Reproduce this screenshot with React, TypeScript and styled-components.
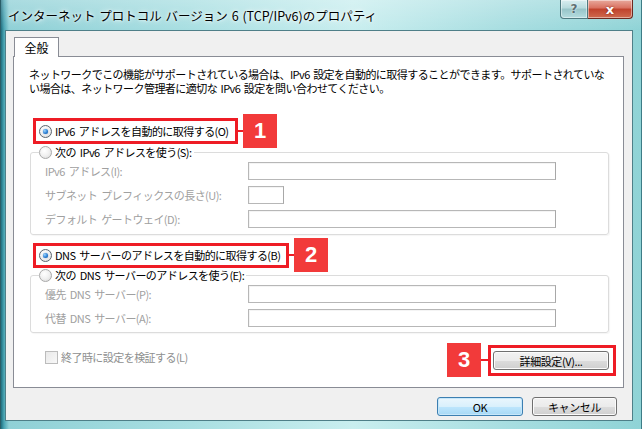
import React from 'react';
import styled, { createGlobalStyle } from 'styled-components';

const Global = createGlobalStyle`
  html, body { margin: 0; padding: 0; }
  body {
    width: 642px; height: 429px; overflow: hidden;
    font-family: "Noto Sans CJK JP", "Noto Sans", sans-serif;
    color: #000;
  }
`;

const Window = styled.div`
  width: 642px;
  height: 429px;
  box-sizing: border-box;
  display: flex;
  flex-direction: column;
  background:
    linear-gradient(180deg, rgba(255,255,255,0.25) 0px, rgba(255,255,255,0) 30px),
    linear-gradient(90deg, #1f6f80 0px, #4aa5b3 3px, #8fd0d6 8px, #a9dfe2 30%, #c9eeef 55%, #a6dde0 80%, #8fd3d6 100%);
  border-left: 1px solid #2a5e68;
  border-right: 1px solid #3d7c86;
`;

const TitleBar = styled.div`
  height: 30px;
  display: flex;
  align-items: flex-start;
  flex-shrink: 0;
`;

const TitleText = styled.div`
  margin: 7px 0 0 7px;
  font-size: 12.5px;
  line-height: 17px;
  word-spacing: 1px;
  white-space: nowrap;
  text-shadow: 0 0 6px #fff, 0 0 3px #fff;
`;

const Captions = styled.div`
  margin-left: auto;
  margin-right: 8px;
  display: flex;
`;

const CaptionButton = styled.div<{ $close?: boolean }>`
  height: 19px;
  width: ${p => (p.$close ? 45 : 28)}px;
  box-sizing: border-box;
  border: 1px solid ${p => (p.$close ? '#6d2a20' : '#4f7a80')};
  border-top: none;
  border-left: ${p => (p.$close ? 'none' : '1px solid #4f7a80')};
  border-radius: ${p => (p.$close ? '0 0 4px 0' : '0 0 0 4px')};
  background: ${p =>
    p.$close
      ? 'linear-gradient(180deg, #e8a99c 0%, #d9705f 45%, #c0422c 50%, #cf6a4e 100%)'
      : 'linear-gradient(180deg, #d9eef0 0%, #b7dadd 45%, #97c4c8 50%, #b5dde0 100%)'};
  box-shadow: inset 0 0 0 1px rgba(255,255,255,0.45);
  display: flex;
  align-items: center;
  justify-content: center;
  font-family: "DejaVu Sans", sans-serif;
  font-weight: bold;
  font-size: ${p => (p.$close ? 13 : 12)}px;
  color: ${p => (p.$close ? '#fff' : '#5d6f72')};
  text-shadow: ${p => (p.$close ? '0 0 2px #6d1a0c' : '0 0 2px #fff')};
`;

const Client = styled.div`
  flex: 1;
  margin: 0 8px 8px 4px;
  background: #f0f0f0;
  border: 1px solid #4e7f88;
  display: flex;
  flex-direction: column;
  padding: 6px 8px 0 7px;
`;

const TabStrip = styled.div`
  display: flex;
  padding-left: 1px;
`;

const Tab = styled.div`
  width: 45px;
  height: 20px;
  box-sizing: border-box;
  border: 1px solid #898c95;
  border-bottom: none;
  background: #fff;
  font-size: 12px;
  line-height: 19px;
  text-align: center;
  margin-bottom: -1px;
  position: relative;
  z-index: 1;
`;

const Page = styled.div`
  height: 332px;
  box-sizing: border-box;
  border: 1px solid #898c95;
  background: #fff;
  display: flex;
  flex-direction: column;
`;

const Description = styled.div`
  margin: 10px 0 0 15px;
  display: flex;
  flex-direction: column;
`;

const DescLine = styled.span`
  display: block;
  height: 14px;
  font-size: 11px;
  line-height: 14px;
  letter-spacing: -0.55px;
  word-spacing: 1.5px;
  white-space: nowrap;
`;

const AnnotRow = styled.div<{ $top: number; $left: number }>`
  display: flex;
  align-items: center;
  height: 34px;
  margin: ${p => p.$top}px 0 0 ${p => p.$left}px;
`;

const Highlight = styled.div<{ $w: number; $h: number }>`
  width: ${p => p.$w}px;
  height: ${p => p.$h}px;
  box-sizing: border-box;
  border: 3px solid #ee1c25;
  display: flex;
  align-items: center;
  padding-left: 3px;
`;

const Connector = styled.div<{ $w: number }>`
  width: ${p => p.$w}px;
  height: 2px;
  background: #ee1c25;
`;

const Badge = styled.div`
  width: 34px;
  height: 34px;
  background: #f23a3a;
  color: #fff;
  font-family: "Liberation Sans", Arial, sans-serif;
  font-weight: bold;
  font-size: 22px;
  display: flex;
  align-items: center;
  justify-content: center;
`;

const Radio = styled.span<{ $checked?: boolean }>`
  width: 13px;
  height: 13px;
  box-sizing: border-box;
  border-radius: 50%;
  border: 1px solid ${p => (p.$checked ? '#5c6670' : '#a9a9a9')};
  background: radial-gradient(circle at 40% 35%, #ffffff 0%, #f0f0f0 50%, #d6d6d6 100%);
  display: inline-flex;
  align-items: center;
  justify-content: center;
  flex-shrink: 0;
  &::after {
    content: '';
    display: ${p => (p.$checked ? 'block' : 'none')};
    width: 5px;
    height: 5px;
    border-radius: 50%;
    background: radial-gradient(circle at 35% 35%, #9fd6ff 0%, #2a7fd4 55%, #0d4f9c 100%);
    box-shadow: 0 0 1px #1f5fa8;
  }
`;

const OptionText = styled.span<{ $disabled?: boolean }>`
  margin-left: 3px;
  font-size: 11px;
  line-height: 14px;
  letter-spacing: -0.55px;
  word-spacing: 2px;
  white-space: nowrap;
  color: ${p => (p.$disabled ? '#8e8f8f' : '#000')};
`;

const Group = styled.fieldset<{ $top: number; $bottom: number }>`
  margin: ${p => p.$top}px 14px 0 16px;
  padding: 0 0 ${p => p.$bottom}px 8px;
  border: 1px solid #dcdcdc;
  border-radius: 3px;
  box-shadow: 1px 1px 1px rgba(0,0,0,0.04);
  min-width: 0;
`;

const Legend = styled.legend`
  padding: 0 2px 0 0;
  display: flex;
  align-items: center;
  height: 14px;
  background: #fff;
`;

const FieldGrid = styled.div<{ $top: number }>`
  display: grid;
  grid-template-columns: 203px auto;
  row-gap: 6px;
  margin: ${p => p.$top}px 0 0 6px;
  align-items: center;
`;

const FieldLabel = styled.span`
  font-size: 11px;
  letter-spacing: -0.55px;
  word-spacing: 2px;
  color: #a0a0a0;
  white-space: nowrap;
`;

const TextBox = styled.div<{ $w: number }>`
  width: ${p => p.$w}px;
  height: 18px;
  box-sizing: border-box;
  border: 1px solid #b7b7b7;
  border-right-color: #a8a8a8;
  background: #fff;
  box-shadow: inset 1px 1px 0 #f4f4f4;
`;

const BottomRow = styled.div`
  display: flex;
  align-items: center;
  height: 34px;
  margin: 10px 7px 0 31px;
`;

const CheckLabel = styled.div`
  display: flex;
  align-items: center;
  margin-bottom: 6px;
`;

const CheckBox = styled.span`
  width: 13px;
  height: 13px;
  box-sizing: border-box;
  border: 1px solid #bcbcbc;
  background: linear-gradient(135deg, #e9e9e9, #f8f8f8);
`;

const AdvancedArea = styled.div`
  margin-left: auto;
  display: flex;
  align-items: center;
`;

const AdvHighlight = styled.div`
  width: 128px;
  height: 31px;
  box-sizing: border-box;
  border: 3px solid #ee1c25;
  display: flex;
  align-items: center;
  padding: 1px 0 0 2px;
`;

const Button = styled.button<{ $w: number; $default?: boolean }>`
  width: ${p => p.$w}px;
  height: 19px;
  box-sizing: border-box;
  padding: 0;
  border: 1px solid ${p => (p.$default ? '#3c7fb1' : '#707070')};
  border-radius: 3px;
  background: ${p =>
    p.$default
      ? 'linear-gradient(180deg, #eaf6fd 0%, #d9f0fc 50%, #bee6fd 50%, #a7d9f5 100%)'
      : 'linear-gradient(180deg, #f2f2f2 0%, #ebebeb 50%, #dddddd 50%, #cfcfcf 100%)'};
  box-shadow: inset 0 0 0 1px ${p => (p.$default ? '#c6e7fa' : '#fbfbfb')};
  font-family: "Noto Sans CJK JP", "Noto Sans", sans-serif;
  font-size: 11px;
  letter-spacing: -0.4px;
  line-height: 16px;
  color: #000;
`;

const ButtonRow = styled.div`
  display: flex;
  justify-content: flex-end;
  gap: 9px;
  margin-top: 9px;
  padding-right: 7px;
`;

export default function App() {
  return (
    <>
      <Global />
      <Window>
        <TitleBar>
          <TitleText>インターネット プロトコル バージョン 6 (TCP/IPv6)のプロパティ</TitleText>
          <Captions>
            <CaptionButton>?</CaptionButton>
            <CaptionButton $close>x</CaptionButton>
          </Captions>
        </TitleBar>
        <Client>
          <TabStrip>
            <Tab>全般</Tab>
          </TabStrip>
          <Page>
            <Description>
              <DescLine>ネットワークでこの機能がサポートされている場合は、IPv6 設定を自動的に取得することができます。サポートされていな</DescLine>
              <DescLine>い場合は、ネットワーク管理者に適切な IPv6 設定を問い合わせてください。</DescLine>
            </Description>

            <AnnotRow $top={19} $left={19}>
              <Highlight $w={205} $h={26}>
                <Radio $checked />
                <OptionText>IPv6 アドレスを自動的に取得する(O)</OptionText>
              </Highlight>
              <Connector $w={5} />
              <Badge>1</Badge>
            </AnnotRow>

            <Group $top={-3} $bottom={6}>
              <Legend>
                <Radio />
                <OptionText>次の IPv6 アドレスを使う(S):</OptionText>
              </Legend>
              <FieldGrid $top={3}>
                <FieldLabel>IPv6 アドレス(I):</FieldLabel>
                <TextBox $w={308} />
                <FieldLabel>サブネット プレフィックスの長さ(U):</FieldLabel>
                <TextBox $w={36} />
                <FieldLabel>デフォルト ゲートウェイ(D):</FieldLabel>
                <TextBox $w={308} />
              </FieldGrid>
            </Group>

            <AnnotRow $top={3} $left={19}>
              <Highlight $w={256} $h={25}>
                <Radio $checked />
                <OptionText>DNS サーバーのアドレスを自動的に取得する(B)</OptionText>
              </Highlight>
              <Connector $w={5} />
              <Badge>2</Badge>
            </AnnotRow>

            <Group $top={-4} $bottom={5}>
              <Legend>
                <Radio />
                <OptionText>次の DNS サーバーのアドレスを使う(E):</OptionText>
              </Legend>
              <FieldGrid $top={3}>
                <FieldLabel>優先 DNS サーバー(P):</FieldLabel>
                <TextBox $w={308} />
                <FieldLabel>代替 DNS サーバー(A):</FieldLabel>
                <TextBox $w={308} />
              </FieldGrid>
            </Group>

            <BottomRow>
              <CheckLabel>
                <CheckBox />
                <OptionText $disabled>終了時に設定を検証する(L)</OptionText>
              </CheckLabel>
              <AdvancedArea>
                <Badge>3</Badge>
                <Connector $w={7} />
                <AdvHighlight>
                  <Button $w={116}>詳細設定(V)...</Button>
                </AdvHighlight>
              </AdvancedArea>
            </BottomRow>
          </Page>
          <ButtonRow>
            <Button $w={86} $default>OK</Button>
            <Button $w={85}>キャンセル</Button>
          </ButtonRow>
        </Client>
      </Window>
    </>
  );
}
